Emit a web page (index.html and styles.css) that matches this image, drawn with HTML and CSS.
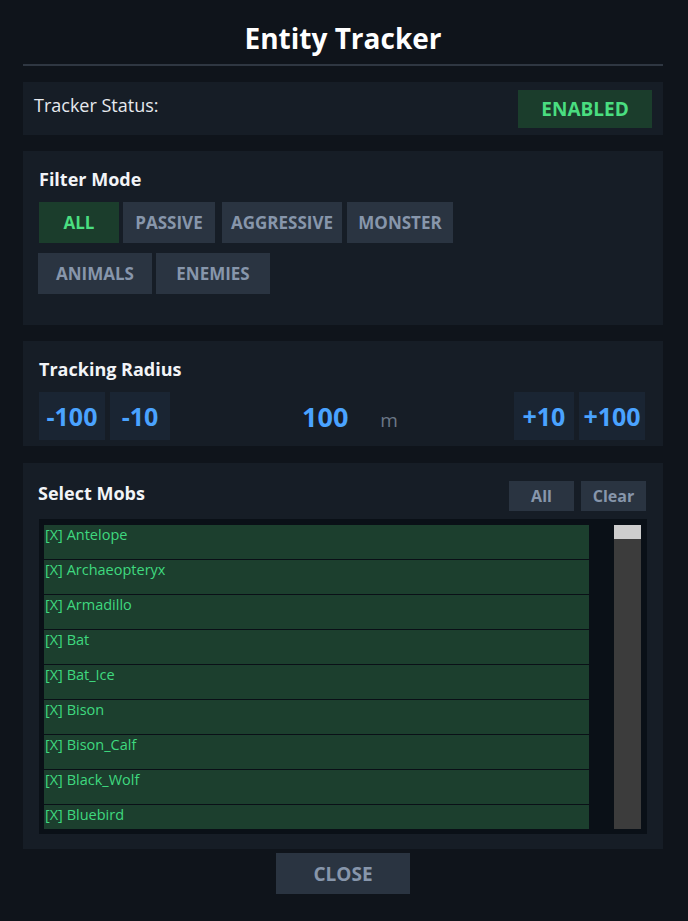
FILE: index.html
```html
<!DOCTYPE html>
<html>
<head>
<meta charset="utf-8">
<link rel="stylesheet" href="styles.css">
</head>
<body>
<div class="window">
  <h1 class="title">Entity Tracker</h1>
  <div class="divider"></div>

  <section class="panel status">
    <span class="status-label">Tracker Status:</span>
    <button class="btn btn-on status-btn">ENABLED</button>
  </section>

  <section class="panel filter">
    <h2 class="panel-title">Filter Mode</h2>
    <div class="filter-row">
      <button class="btn btn-on f-all">ALL</button>
      <button class="btn f-passive">PASSIVE</button>
      <button class="btn f-aggr">AGGRESSIVE</button>
      <button class="btn f-monster">MONSTER</button>
    </div>
    <div class="filter-row row2">
      <button class="btn f-wide">ANIMALS</button>
      <button class="btn f-wide">ENEMIES</button>
    </div>
  </section>

  <section class="panel radius">
    <h2 class="panel-title">Tracking Radius</h2>
    <div class="radius-row">
      <div class="step-group">
        <button class="step s-big">-100</button>
        <button class="step">-10</button>
      </div>
      <div class="radius-value"><span class="num">100</span><span class="unit">m</span></div>
      <div class="step-group">
        <button class="step">+10</button>
        <button class="step s-big">+100</button>
      </div>
    </div>
  </section>

  <section class="panel mobs">
    <div class="mobs-head">
      <h2 class="panel-title">Select Mobs</h2>
      <div class="mobs-actions">
        <button class="btn small">All</button>
        <button class="btn small">Clear</button>
      </div>
    </div>
    <div class="list-box">
      <div class="list">
        <div class="item">[X] Antelope</div>
        <div class="item">[X] Archaeopteryx</div>
        <div class="item">[X] Armadillo</div>
        <div class="item">[X] Bat</div>
        <div class="item">[X] Bat_Ice</div>
        <div class="item">[X] Bison</div>
        <div class="item">[X] Bison_Calf</div>
        <div class="item">[X] Black_Wolf</div>
        <div class="item">[X] Bluebird</div>
      </div>
      <div class="scrollbar"><div class="thumb"></div></div>
    </div>
  </section>

  <div class="footer">
    <button class="btn close">CLOSE</button>
  </div>
</div>
</body>
</html>
```

FILE: styles.css
```css
* { box-sizing: border-box; }
html, body {
  margin: 0;
  padding: 0;
  width: 688px;
  height: 921px;
  overflow: hidden;
  background: #0f141b;
  font-family: "Open Sans", "Noto Sans", sans-serif;
  color: #e6e9ee;
}
.window {
  padding: 0 25px 0 23px;
}
.title {
  margin: 0;
  padding-top: 19px;
  height: 64px;
  text-align: center;
  font-size: 28px;
  font-weight: 700;
  line-height: 38px;
  color: #ffffff;
}
.divider {
  height: 2px;
  background: #2f3742;
  margin-bottom: 16px;
}
.panel {
  background: #161d26;
  margin-bottom: 16px;
}
button {
  font-family: inherit;
  border: none;
  cursor: pointer;
}
.btn {
  background: #2a3441;
  color: #8796ab;
  font-weight: 700;
  font-size: 17px;
  height: 41px;
  padding: 0;
}
.btn-on {
  background: #1b3d2c;
  color: #4ade80;
}
.status {
  height: 53px;
  display: flex;
  justify-content: space-between;
  align-items: flex-start;
  padding: 8px 11px 0 11px;
}
.status-label {
  font-size: 18px;
  line-height: 22px;
  padding-top: 4px;
  color: #e6e9ee;
}
.status-btn {
  width: 134px;
  height: 38px;
  font-size: 19px;
}
.panel-title {
  margin: 0;
  font-size: 18px;
  font-weight: 700;
  line-height: 22px;
  color: #f2f4f7;
}
.filter {
  height: 174px;
  padding: 17px 16px 0 16px;
}
.filter .panel-title { margin-bottom: 12px; }
.filter-row {
  display: flex;
  gap: 4px;
}
.filter-row.row2 {
  margin-top: 10px;
  margin-left: -1px;
}
.f-all { width: 80px; }
.f-passive { width: 92px; margin-right: 3px; }
.f-aggr { width: 120px; margin-right: 1px; }
.f-monster { width: 106px; }
.f-wide { width: 114px; }

.radius {
  height: 105px;
  margin-bottom: 17px;
  padding: 17px 18px 0 16px;
}
.radius .panel-title { margin-bottom: 12px; }
.radius-row {
  display: flex;
  justify-content: space-between;
  align-items: center;
}
.step-group {
  display: flex;
  gap: 5px;
}
.step {
  width: 60px;
  height: 48px;
  background: #1a2533;
  color: #4aa3ff;
  font-size: 25px;
  font-weight: 700;
  padding: 0;
}
.step.s-big { width: 66px; }
.radius-value {
  display: flex;
  align-items: baseline;
  margin-left: 16px;
}
.num {
  font-size: 27px;
  font-weight: 700;
  color: #4aa3ff;
}
.unit {
  font-size: 19px;
  color: #6b7786;
  margin-left: 32px;
}

.mobs {
  height: 386px;
  padding: 18px 16px 0 16px;
}
.mobs-head {
  display: flex;
  justify-content: space-between;
  align-items: flex-start;
  margin-bottom: 8px;
}
.mobs-head .panel-title {
  margin-left: -1px;
  padding-top: 1px;
}
.mobs-actions {
  display: flex;
  gap: 7px;
  margin-right: 1px;
}
.btn.small {
  height: 30px;
  width: 65px;
  font-size: 16px;
}
.list-box {
  height: 315px;
  background: #0a1017;
  display: flex;
  justify-content: space-between;
  padding: 6px 6px 5px 5px;
}
.list {
  width: 545px;
  overflow: hidden;
}
.item {
  height: 35px;
  background: #1c3f2e;
  border-bottom: 1px solid #0a1017;
  color: #3fd97f;
  font-size: 14.5px;
  line-height: 20px;
  padding: 0 1px;
}
.scrollbar {
  width: 27px;
  background: #3c3c3c;
}
.thumb {
  height: 14px;
  background: #cdcdcd;
}
.footer {
  display: flex;
  justify-content: center;
  margin-top: -12px;
}
.btn.close {
  width: 134px;
  height: 41px;
  font-size: 19px;
}
```
